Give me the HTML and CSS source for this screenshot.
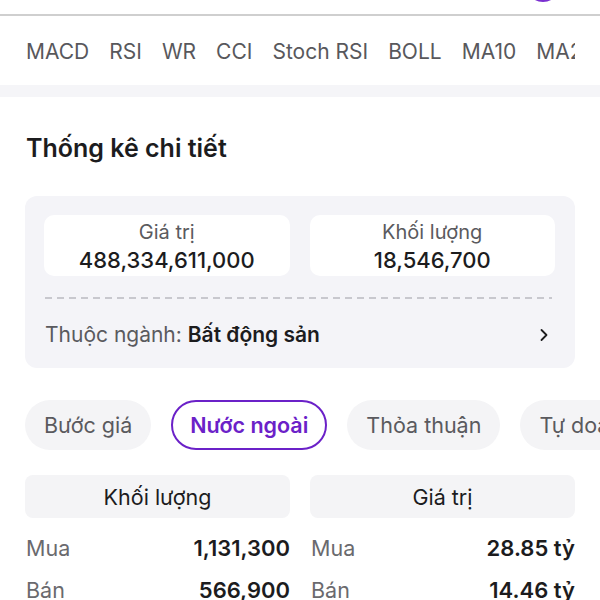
FILE: index.html
```html
<!DOCTYPE html>
<html lang="vi">
<head>
<meta charset="UTF-8">
<meta name="viewport" content="width=device-width, initial-scale=1.0">
<title>Thống kê chi tiết</title>
<link rel="stylesheet" href="styles.css">
</head>
<body>

<!-- Top bar -->
<div class="topbar">
    <span class="avatar"></span>
</div>

<!-- Indicator tabs -->
<div class="indicators">
    <span>MACD</span>
    <span>RSI</span>
    <span>WR</span>
    <span>CCI</span>
    <span>Stoch RSI</span>
    <span>BOLL</span>
    <span>MA10</span>
    <span>MA20</span>
    <span>MA50</span>
</div>

<div class="spacer"></div>

<div class="section">
    <h2>Thống kê chi tiết</h2>

    <div class="summary">
        <div class="summary-grid">
            <div class="stat">
                <div class="stat-label">Giá trị</div>
                <div class="stat-value">488,334,611,000</div>
            </div>
            <div class="stat">
                <div class="stat-label">Khối lượng</div>
                <div class="stat-value">18,546,700</div>
            </div>
        </div>
        <div class="dashed"></div>
        <div class="industry">
            <span>Thuộc ngành: <b>Bất động sản</b></span>
            <svg width="14" height="14" viewBox="0 0 14 14">
                <path d="M4.5 2 L9.5 7 L4.5 12" fill="none" stroke="#1c1c1e" stroke-width="1.8" stroke-linecap="round" stroke-linejoin="round"/>
            </svg>
        </div>
    </div>

    <!-- Filter pills -->
    <div class="pills">
        <span class="pill">Bước giá</span>
        <span class="pill active">Nước ngoài</span>
        <span class="pill">Thỏa thuận</span>
        <span class="pill">Tự doanh</span>
    </div>

    <!-- Foreign trade table -->
    <div class="trade-grid">
        <div class="trade-col">
            <div class="trade-head">Khối lượng</div>
            <div class="trade-row"><span>Mua</span><b>1,131,300</b></div>
            <div class="trade-row"><span>Bán</span><b>566,900</b></div>
        </div>
        <div class="trade-col">
            <div class="trade-head">Giá trị</div>
            <div class="trade-row"><span>Mua</span><b>28.85 tỷ</b></div>
            <div class="trade-row"><span>Bán</span><b>14.46 tỷ</b></div>
        </div>
    </div>
</div>

</body>
</html>
```

FILE: styles.css
```css
/* General Styles */
* {
    margin: 0;
    padding: 0;
    box-sizing: border-box;
    font-family: 'Inter', 'Noto Sans', sans-serif;
}

body {
    background: white;
    color: #1c1c1e;
    width: 600px;
    height: 600px;
    overflow: hidden;
}

/* Top bar */
.topbar {
    height: 16px;
    border-bottom: 2px solid #cfcfcf;
    display: flex;
    justify-content: flex-end;
    align-items: flex-end;
    overflow: hidden;
}

.avatar {
    width: 34px;
    height: 34px;
    border: 3px solid #7a2fd0;
    border-radius: 50%;
    margin-right: 40px;
    margin-bottom: 12px;
    flex-shrink: 0;
}

/* Indicator tabs */
.indicators {
    height: 69px;
    width: 575px;
    display: flex;
    align-items: center;
    gap: 20px;
    padding-left: 26px;
    padding-top: 1px;
    white-space: nowrap;
    overflow: hidden;
    font-size: 21px;
    color: #58585c;
}

.spacer {
    height: 12px;
    background: #f5f5f8;
}

/* Section */
.section {
    padding: 35px 25px 0 25px;
}

h2 {
    font-size: 25px;
    font-weight: 600;
    line-height: 32px;
    color: #1c1c1e;
    padding-left: 1px;
    margin-bottom: 32px;
}

/* Summary card */
.summary {
    background: #f4f4f8;
    border-radius: 12px;
    padding: 19px 20px 0 19px;
    height: 172px;
}

.summary-grid {
    display: grid;
    grid-template-columns: 1fr 1fr;
    gap: 20px;
}

.stat {
    background: white;
    border-radius: 10px;
    height: 61px;
    display: flex;
    flex-direction: column;
    justify-content: center;
    align-items: center;
    padding-top: 1px;
}

.stat-label {
    font-size: 20px;
    color: #5a5a5e;
    line-height: 28px;
}

.stat-value {
    font-size: 22px;
    font-weight: 500;
    line-height: 28px;
    color: #1c1c1e;
}

.dashed {
    margin: 21px 3px 0 1px;
    height: 1.5px;
    background: repeating-linear-gradient(to right, #c8c8ce 0 7px, transparent 7px 12px);
}

.industry {
    display: flex;
    justify-content: space-between;
    align-items: center;
    height: 72px;
    padding: 0 4px 0 1px;
    font-size: 21px;
    color: #5a5a5e;
}

.industry b {
    font-weight: 600;
    color: #1c1c1e;
}

/* Pills */
.pills {
    display: flex;
    gap: 20px;
    margin-top: 32px;
    white-space: nowrap;
    margin-right: -25px;
    overflow: hidden;
}

.pill {
    height: 50px;
    padding: 0 19px;
    border-radius: 25px;
    background: #f4f4f6;
    color: #5a5a5e;
    font-size: 21.5px;
    display: flex;
    align-items: center;
    flex-shrink: 0;
}

.pill.active {
    background: white;
    border: 2px solid #6b21c8;
    padding: 0 17px;
    color: #6b21c8;
    font-weight: 600;
}

/* Trade table */
.trade-grid {
    display: grid;
    grid-template-columns: 1fr 1fr;
    gap: 20px;
    margin-top: 25px;
}

.trade-head {
    height: 43px;
    background: #f4f4f6;
    border-radius: 8px;
    display: flex;
    justify-content: center;
    align-items: center;
    font-size: 21.5px;
    color: #1c1c1e;
}

.trade-row {
    height: 42px;
    display: flex;
    justify-content: space-between;
    align-items: center;
    font-size: 21.5px;
    padding-left: 1px;
    margin-top: 9px;
}

.trade-row + .trade-row {
    margin-top: 0;
}

.trade-row span {
    color: #6a6a6e;
}

.trade-row b {
    font-weight: 600;
    font-size: 22px;
    color: #1c1c1e;
}
```
